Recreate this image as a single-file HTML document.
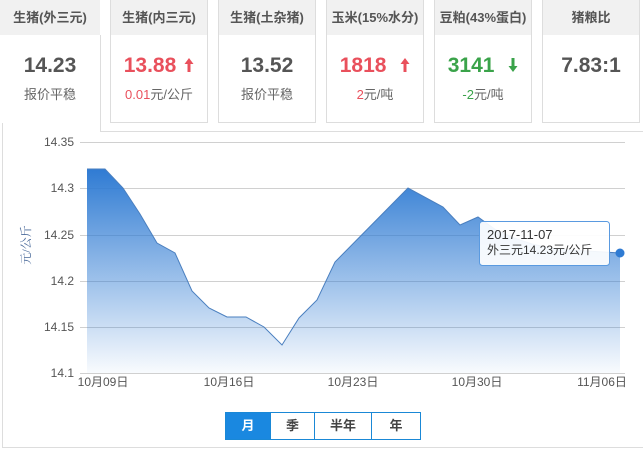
<!DOCTYPE html>
<html><head><meta charset="utf-8"><style>
*{margin:0;padding:0;box-sizing:border-box}
body{width:643px;height:450px;background:#fff;position:relative;overflow:hidden;font-family:"Liberation Sans","Microsoft YaHei","Noto Sans CJK SC",sans-serif;color:#555}
.card{position:absolute;top:0;width:98px;height:123px;border:1px solid #ddd;border-top:none;background:#fff;text-align:center}
.card .h{height:35px;background:#f1f1f1;font-size:13px;font-weight:bold;line-height:35px;color:#555}
.card .v{font-size:21px;font-weight:bold;margin-top:18px;line-height:26px}
.card .s{font-size:13px;margin-top:5px;color:#666}
.red{color:#e9505c}.green{color:#3aa34a}
.arr{display:inline-block;margin-left:8px;vertical-align:-1px}
.btns{position:absolute;top:412px;left:225px;height:28px;display:flex;border:1px solid #1a88d6}
.btns div{font-size:13px;font-weight:bold;line-height:26px;text-align:center;border-left:1px solid #1a88d6;color:#444}
</style></head><body>
<div style="position:absolute;left:2px;top:35px;width:1px;height:413px;background:#ddd"></div>
<div style="position:absolute;left:100px;top:35px;width:1px;height:97px;background:#ddd"></div>
<div style="position:absolute;left:100px;top:131px;width:543px;height:1px;background:#ddd"></div>
<div style="position:absolute;left:2px;top:447px;width:641px;height:1px;background:#ddd"></div>
<div class="card" style="left:0;width:100px;border:none"><div class="h">生猪(外三元)</div><div class="v">14.23</div><div class="s">报价平稳</div></div>
<div class="card" style="left:110px"><div class="h">生猪(内三元)</div><div class="v red">13.88<svg class="arr" width="10" height="16" viewBox="0 0 10 16"><path d="M5,1 L9.5,7 L6.5,7 L6.5,15 L3.5,15 L3.5,7 L0.5,7 Z" fill="#e9505c"/></svg></div><div class="s"><span class="red">0.01</span>元/公斤</div></div>
<div class="card" style="left:218px"><div class="h">生猪(土杂猪)</div><div class="v">13.52</div><div class="s">报价平稳</div></div>
<div class="card" style="left:326px"><div class="h">玉米(15%水分)</div><div class="v red">1818 <svg class="arr" width="10" height="16" viewBox="0 0 10 16"><path d="M5,1 L9.5,7 L6.5,7 L6.5,15 L3.5,15 L3.5,7 L0.5,7 Z" fill="#e9505c"/></svg></div><div class="s"><span class="red">2</span>元/吨</div></div>
<div class="card" style="left:434px"><div class="h">豆粕(43%蛋白)</div><div class="v green">3141 <svg class="arr" width="10" height="16" viewBox="0 0 10 16"><path d="M5,15 L9.5,9 L6.5,9 L6.5,1 L3.5,1 L3.5,9 L0.5,9 Z" fill="#3aa34a"/></svg></div><div class="s"><span class="green">-2</span>元/吨</div></div>
<div class="card" style="left:542px"><div class="h">猪粮比</div><div class="v">7.83:1</div></div>
<svg style="position:absolute;left:0;top:0" width="643" height="450">
<defs><linearGradient id="g" x1="0" y1="0" x2="0" y2="1"><stop offset="0" stop-color="#2f7bd3"/><stop offset="1" stop-color="#2f7bd3" stop-opacity="0.03"/></linearGradient></defs>
<g stroke="#d0d0d0" stroke-width="1">
<line x1="80" y1="142.5" x2="625" y2="142.5"/><line x1="80" y1="188.5" x2="625" y2="188.5"/><line x1="80" y1="235.5" x2="625" y2="235.5"/><line x1="80" y1="281.5" x2="625" y2="281.5"/><line x1="80" y1="327.5" x2="625" y2="327.5"/><line x1="80" y1="373.5" x2="625" y2="373.5"/>
</g>
<path d="M87,373 L87,169 L105,169 L123,188 L140,214 L157,243 L175,253 L192,291 L209,308 L227,317 L246,317 L264,327 L282,345 L299,318 L317,300 L335,262 L408,188 L443,207 L460,225 L478,217 L496,230 L514,238 L532,244 L550,248 L568,250 L586,251 L604,252 L620,253 L620,373 Z" fill="url(#g)"/>
<path d="M87,169 L105,169 L123,188 L140,214 L157,243 L175,253 L192,291 L209,308 L227,317 L246,317 L264,327 L282,345 L299,318 L317,300 L335,262 L408,188 L443,207 L460,225 L478,217 L496,230 L514,238 L532,244 L550,248 L568,250 L586,251 L604,252 L620,253" fill="none" stroke="#4a7fbf" stroke-width="1"/>
<circle cx="620" cy="253" r="4.5" fill="#2f7bd3"/>
<g font-size="12" fill="#555" text-anchor="end"><text x="74" y="146">14.35</text><text x="74" y="192">14.3</text><text x="74" y="239">14.25</text><text x="74" y="285">14.2</text><text x="74" y="331">14.15</text><text x="74" y="377">14.1</text></g>
<g font-size="12" fill="#555" text-anchor="middle"><text x="103" y="386">10月09日</text><text x="229" y="386">10月16日</text><text x="353" y="386">10月23日</text><text x="477" y="386">10月30日</text><text x="602" y="386">11月06日</text></g>
<text transform="translate(30,245) rotate(-90)" font-size="12" fill="#4a6a9a" text-anchor="middle" font-family="Liberation Serif,Noto Serif CJK SC,serif">元/公斤</text>
<rect x="479.5" y="221.5" width="130" height="44" rx="3" fill="#fff" fill-opacity="0.92" stroke="#5a9ae0"/>
<text x="487" y="239" font-size="13" fill="#333">2017-11-07</text>
<text x="487" y="254" font-size="12" fill="#333">外三元14.23元/公斤</text>
</svg>
<div class="btns"><div style="width:44px;border:none;background:#1a88e0;color:#fff">月</div><div style="width:44px">季</div><div style="width:57px">半年</div><div style="width:49px">年</div></div>
</body></html>
